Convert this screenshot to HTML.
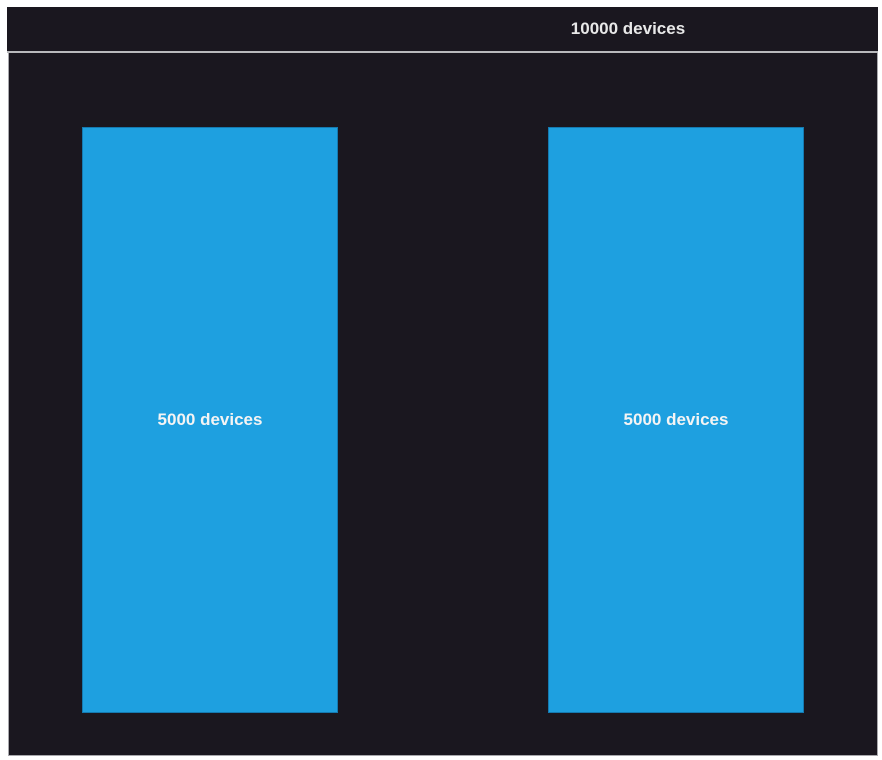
<!DOCTYPE html>
<html><head><style>
html,body{margin:0;padding:0;background:#fff;width:882px;height:760px;overflow:hidden;font-family:"Liberation Sans",sans-serif;}
.top{position:absolute;left:7px;top:7px;width:871px;height:44px;background:#1a171f;border-bottom:2px solid #b9b9bc;}
.top span{position:absolute;left:556px;top:12px;width:130px;text-align:center;color:#e8e8e8;font-weight:bold;font-size:17px;}
.panel{position:absolute;left:8px;top:53px;width:868px;height:702px;background:#1a171f;border:1px solid #a8a8ac;border-top:none;}
.b{position:absolute;top:127px;width:254px;height:584px;background:#1ea0e0;border:1px solid #157ab0;color:#f4f4f4;font-weight:bold;font-size:17px;display:flex;align-items:center;justify-content:center;}
</style></head><body>
<div class="top"><span>10000 devices</span></div>
<div class="panel"></div>
<div class="b" style="left:82px">5000 devices</div>
<div class="b" style="left:548px">5000 devices</div>
</body></html>
